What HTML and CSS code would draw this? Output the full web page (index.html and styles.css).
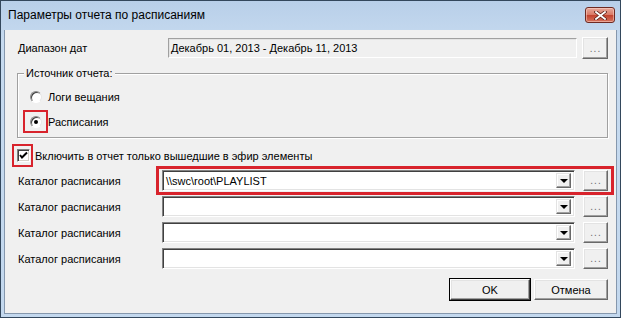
FILE: index.html
```html
<!DOCTYPE html>
<html lang="ru">
<head>
  <meta charset="UTF-8" />
  <title>Параметры отчета по расписаниям</title>
  <link rel="stylesheet" href="styles.css">
</head>
<body>
  <div class="window">
    <div class="titlebar">
      <span class="title">Параметры отчета по расписаниям</span>
      <div class="close">
        <svg width="13" height="9" viewBox="0 0 13 9">
          <path d="M2 1 L11 8 M11 1 L2 8" stroke="#5a1e16" stroke-width="3.4" stroke-linecap="square" />
          <path d="M2 1 L11 8 M11 1 L2 8" stroke="#fff" stroke-width="1.8" stroke-linecap="square" />
        </svg>
      </div>
    </div>

    <div class="content">
      <div class="date-row">
        <span class="label">Диапазон дат</span>
        <div class="field readonly">Декабрь 01, 2013 - Декабрь 11, 2013</div>
        <div class="btn browse date-browse">...</div>
      </div>

      <div class="group">
        <span class="legend">Источник отчета:</span>
        <div class="radio-row"><span class="radio"></span>Логи вещания</div>
        <div class="radio-row"><span class="radio checked mark-radio"></span>Расписания</div>
      </div>

      <div class="check-row">
        <span class="checkbox mark-check">
          <svg width="9" height="9" viewBox="0 0 9 9">
            <path d="M1 4 L3 6.5 L8 1.5" fill="none" stroke="#000" stroke-width="2" />
          </svg>
        </span>
        Включить в отчет только вышедшие в эфир элементы
      </div>

      <div class="catalogs">
        <div class="catalog-row">
          <span class="label">Каталог расписания</span>
          <div class="combo mark-row">
            <span class="combo-text">\\swc\root\PLAYLIST</span>
            <span class="arrow"></span>
          </div>
          <div class="btn browse">...</div>
        </div>
        <div class="catalog-row">
          <span class="label">Каталог расписания</span>
          <div class="combo"><span class="combo-text"></span><span class="arrow"></span></div>
          <div class="btn browse">...</div>
        </div>
        <div class="catalog-row">
          <span class="label">Каталог расписания</span>
          <div class="combo"><span class="combo-text"></span><span class="arrow"></span></div>
          <div class="btn browse">...</div>
        </div>
        <div class="catalog-row">
          <span class="label">Каталог расписания</span>
          <div class="combo"><span class="combo-text"></span><span class="arrow"></span></div>
          <div class="btn browse">...</div>
        </div>
      </div>

      <div class="actions">
        <div class="btn ok">OK</div>
        <div class="btn cancel">Отмена</div>
      </div>
    </div>
  </div>
</body>
</html>
```

FILE: styles.css
```css
* {
  box-sizing: border-box;
  margin: 0;
  padding: 0;
}

body {
  font-family: "Liberation Sans", Arial, sans-serif;
  font-size: 11px;
  color: #000;
  background: #f0f0f0;
}

.window {
  width: 621px;
  height: 318px;
  border: 1px solid #33475c;
  background: linear-gradient(#b8cfe9, #c6daef 40px, #c3d8ee);
  display: flex;
  flex-direction: column;
}

.titlebar {
  height: 29px;
  display: flex;
  justify-content: space-between;
  align-items: flex-start;
  padding: 0 5px 0 7px;
}

.title {
  font-size: 12px;
  line-height: 28px;
  color: #000;
}

.close {
  margin-top: 6px;
  width: 30px;
  height: 16px;
  border: 1px solid #6e2a22;
  border-radius: 3px;
  background: linear-gradient(#e7a99b, #d97763 50%, #c2412d 51%, #d5735d);
  box-shadow: inset 0 0 0 1px rgba(255, 220, 210, 0.5);
  display: flex;
  justify-content: center;
  align-items: center;
}

.content {
  flex: 1;
  margin: 0 3px 3px 3px;
  background: #f0f0f0;
  border: 1px solid #8597ad;
  border-top: none;
  padding: 7px 8px 0 13px;
  position: relative;
}

.label {
  flex: 0 0 145px;
  line-height: 14px;
}

.date-row {
  display: flex;
  align-items: center;
  gap: 5px;
  height: 22px;
}

.field {
  flex: 1;
  height: 20px;
  padding: 0 2px;
  line-height: 18px;
  border: 1px solid;
  border-color: #a0a0a0 #fff #fff #a0a0a0;
  box-shadow: inset 1px 1px 0 #e3e3e3;
}

.readonly {
  background: #f0f0f0;
}

.btn {
  border: 1px solid;
  border-color: #fff #696969 #696969 #fff;
  box-shadow: inset -1px -1px 0 #a0a0a0, inset 1px 1px 0 #e3e3e3;
  background: #f0f0f0;
  display: flex;
  justify-content: center;
  align-items: center;
}

.browse {
  flex: 0 0 25px;
  height: 21px;
  color: #6d6d6d;
  font-size: 10px;
  letter-spacing: 1px;
  padding-left: 1px;
}

.date-browse {
  flex-basis: 26px;
  height: 22px;
}

.group {
  margin: 14px 0 0 -1px;
  height: 65px;
  border: 1px solid #a0a0a0;
  box-shadow: inset 1px 1px 0 #fff, 1px 1px 0 #fff;
  padding: 0 12px;
}

.legend {
  display: block;
  width: fit-content;
  margin: -8px 0 0 -6px;
  padding: 0 2px;
  line-height: 14px;
  background: #f0f0f0;
}

.radio-row {
  display: flex;
  align-items: center;
  gap: 6px;
  height: 16px;
  margin-top: 9px;
}

.radio {
  position: relative;
  width: 12px;
  height: 12px;
  border-radius: 50%;
  border: 1px solid;
  border-color: #8a8a8a #e6e6e6 #fff #8a8a8a;
  box-shadow: inset 1px 1px 0 #404040;
  background: #fff;
}

.radio.checked::before {
  content: "";
  position: absolute;
  left: 3px;
  top: 3px;
  width: 4px;
  height: 4px;
  border-radius: 50%;
  background: #000;
}

.check-row {
  margin-top: 11px;
  display: flex;
  align-items: center;
  gap: 5px;
  height: 13px;
}

.checkbox {
  position: relative;
  margin-left: -1px;
  width: 13px;
  height: 13px;
  border: 1px solid;
  border-color: #808080 #fff #fff #808080;
  box-shadow: inset 1px 1px 0 #404040, inset -1px -1px 0 #d4d0c8;
  background: #fff;
  display: flex;
  justify-content: center;
  align-items: center;
}

.catalogs {
  margin-top: 8px;
  display: flex;
  flex-direction: column;
  gap: 5px;
}

.catalog-row {
  display: flex;
  align-items: center;
  height: 21px;
}

.catalog-row .label {
  flex-basis: 144px;
}

.combo {
  position: relative;
  flex: 1;
  height: 21px;
  margin-right: 8px;
  background: #fff;
  border: 1px solid;
  border-color: #828282 #fff #fff #828282;
  box-shadow: inset 1px 1px 0 #404040, inset -1px -1px 0 #e3e3e3;
  display: flex;
  align-items: center;
  padding: 2px 2px 2px 3px;
}

.combo-text {
  flex: 1;
  line-height: 14px;
}

.arrow {
  width: 15px;
  height: 15px;
  margin-right: 1px;
  border: 1px solid;
  border-color: #e3e3e3 #696969 #696969 #e3e3e3;
  box-shadow: inset -1px -1px 0 #a0a0a0, inset 1px 1px 0 #fff;
  background: #f0f0f0;
  display: flex;
  justify-content: center;
  align-items: center;
}

.arrow::after {
  content: "";
  border-left: 4px solid transparent;
  border-right: 4px solid transparent;
  border-top: 4px solid #000;
  margin-top: 1px;
}

.actions {
  margin-top: 10px;
  display: flex;
  justify-content: flex-end;
  gap: 4px;
}

.actions .btn {
  height: 21px;
  font-size: 11px;
}

.ok {
  width: 80px;
  outline: 1px solid #000;
  outline-offset: 0;
  border-color: #fff #404040 #404040 #fff;
}

.cancel {
  width: 74px;
}

/* red callouts drawn over the screenshot */
.mark-radio::after,
.mark-check::after,
.mark-row::after {
  content: "";
  position: absolute;
  border: 2px solid #d8232c;
}

.mark-radio::after {
  top: -7px;
  left: -8px;
  right: -7px;
  bottom: -6px;
}

.mark-check::after {
  top: -6px;
  left: -6px;
  right: -4px;
  bottom: -6px;
}

.mark-row::after {
  top: -5px;
  left: -7px;
  right: -40px;
  bottom: -5px;
  border-width: 3px;
}
```
